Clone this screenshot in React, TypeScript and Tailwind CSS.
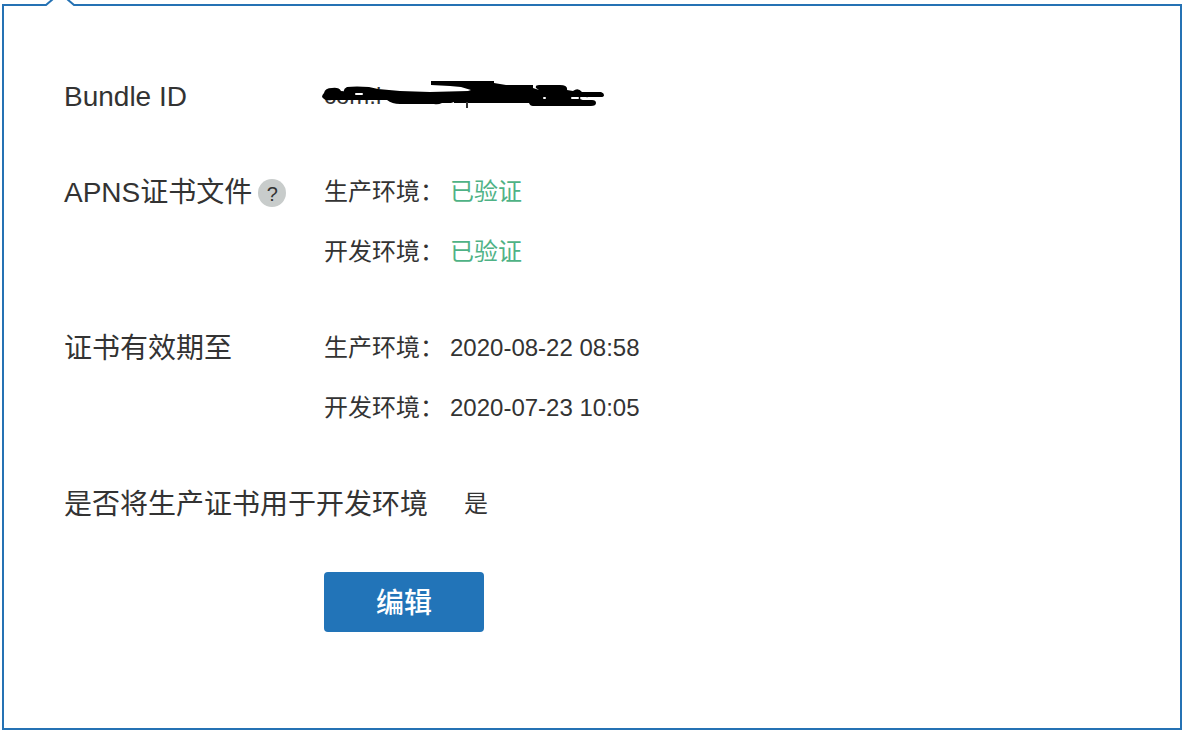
import type { ReactNode } from "react";

function Row({ label, children }: { label: ReactNode; children: ReactNode }) {
  return (
    <div className="flex">
      <dt className="flex h-[60px] min-w-[260px] shrink-0 items-center pt-0.5 text-[28px] leading-9">{label}</dt>
      <dd className="text-2xl leading-[60px]">{children}</dd>
    </div>
  );
}

function Entry({ name, children }: { name: string; children: ReactNode }) {
  return (
    <div className="flex gap-1.5">
      <span>{name}：</span>
      {children}
    </div>
  );
}

function Scribble() {
  return (
    <svg className="absolute top-3 -left-1 h-9 w-72" viewBox="0 0 288 36" aria-hidden="true">
      <path
        d="M2 19 Q2 17 4 15 Q5 10 12 10 Q19 9 21 13 L24 14 Q23 11 27 9 Q36 8 49 9 L58 11 L80 13 L110 14 L148 13 L151 12 L141 9 L130 8 L111 7 V3 H174 V5 L186 7 H213 V10 L219 12 L216 10 Q215 7 219 7 H240 Q248 7 247 12 L253 13 Q258 9 262 14 H281 Q284 15 284 17 Q284 19 281 19 H268 L260 22 H272 Q276 22 276 25 Q276 28 271 28 H213 Q210 28 209 25 H134 V24 L131 25 L122 25 Q118 27 114 26 H80 Q72 26 67 22 H12 Q6 23 4 21 Z"
        fill="#000"
      />
      <path d="M147 24v6" stroke="#333" strokeWidth="2" />
      <path d="M36 16h6M252 20h6M261 20h5M224 20h1" stroke="#fff" strokeWidth="2" strokeLinecap="round" />
    </svg>
  );
}

export default function App() {
  return (
    <main className="flow-root bg-white font-['Liberation_Sans','Noto_Sans_CJK_SC',sans-serif] text-[#333]">
      <section className="relative mt-1 mr-1 mb-0.5 ml-0.5 border-2 border-[#2572b4] px-[60px] pt-[60px] pb-24">
        <svg className="absolute -top-1.5 left-10 h-1.5 w-8" viewBox="0 0 32 6" aria-hidden="true">
          <path d="M1 6 L8 0 H24 L31 6 Z" fill="#fff" />
          <path d="M0 5 H2 L9 -1 M23 -1 L30 5 H32" fill="none" stroke="#2572b4" strokeWidth="2" />
        </svg>
        <dl className="flex flex-col gap-9">
          <Row label="Bundle ID">
            <span className="relative block">
              com.i
              <Scribble />
            </span>
          </Row>
          <Row
            label={
              <>
                APNS证书文件
                <button
                  type="button"
                  aria-label="帮助"
                  className="ml-1.5 flex size-7 items-center justify-center rounded-full bg-[#c8cccb] pt-0.5 text-xl leading-6"
                >
                  ?
                </button>
              </>
            }
          >
            <Entry name="生产环境"><span className="text-[#4fb286]">已验证</span></Entry>
            <Entry name="开发环境"><span className="text-[#4fb286]">已验证</span></Entry>
          </Row>
          <Row label="证书有效期至">
            <Entry name="生产环境"><time>2020-08-22 08:58</time></Entry>
            <Entry name="开发环境"><time>2020-07-23 10:05</time></Entry>
          </Row>
          <Row label={<span className="mr-9">是否将生产证书用于开发环境</span>}>是</Row>
        </dl>
        <button
          type="button"
          className="mt-[38px] ml-[260px] block h-[60px] w-40 rounded bg-[#2274b8] pt-1 text-[28px] font-medium text-white"
        >
          编辑
        </button>
      </section>
    </main>
  );
}
